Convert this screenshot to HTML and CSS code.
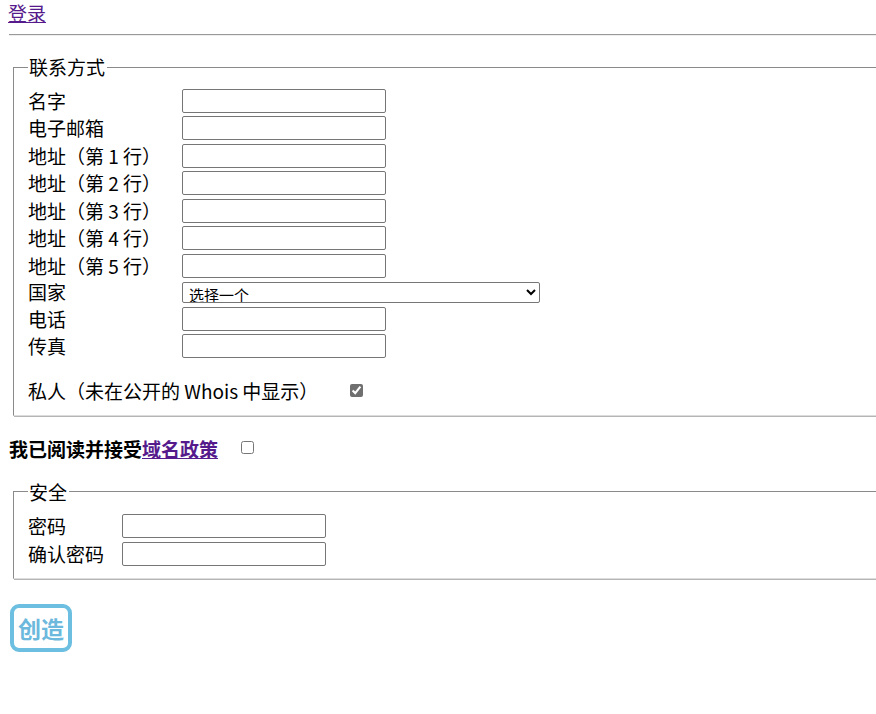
FILE: index.html
```html
<!DOCTYPE html>
<html lang="zh">
<head>
<meta charset="utf-8">
<title>注册</title>
<link rel="stylesheet" href="styles.css">
</head>
<body>
<div class="page">
  <a class="login" href="#">登录</a>
  <hr class="rule">
  <form class="form">
    <fieldset class="box contact">
      <legend class="legend">联系方式</legend>
      <div class="grid">
        <label class="lbl">名字</label><div class="cell"><input class="field" type="text"></div>
        <label class="lbl">电子邮箱</label><div class="cell"><input class="field" type="text"></div>
        <label class="lbl">地址（第 1 行）</label><div class="cell"><input class="field" type="text"></div>
        <label class="lbl">地址（第 2 行）</label><div class="cell"><input class="field" type="text"></div>
        <label class="lbl">地址（第 3 行）</label><div class="cell"><input class="field" type="text"></div>
        <label class="lbl">地址（第 4 行）</label><div class="cell"><input class="field" type="text"></div>
        <label class="lbl">地址（第 5 行）</label><div class="cell"><input class="field" type="text"></div>
        <label class="lbl">国家</label><div class="cell"><select class="country"><option>选择一个</option></select></div>
        <label class="lbl">电话</label><div class="cell"><input class="field" type="text"></div>
        <label class="lbl">传真</label><div class="cell"><input class="field" type="text"></div>
      </div>
      <div class="private">
        <span class="lbl private-lbl">私人（未在公开的 Whois 中显示）</span>
        <input class="check private-check" type="checkbox" checked>
      </div>
    </fieldset>
    <div class="agree">
      <span class="agree-text">我已阅读并接受<a class="policy" href="#">域名政策</a></span>
      <input class="check agree-check" type="checkbox">
    </div>
    <fieldset class="box security">
      <legend class="legend">安全</legend>
      <div class="grid grid-sec">
        <label class="lbl">密码</label><div class="cell"><input class="field" type="password"></div>
        <label class="lbl">确认密码</label><div class="cell"><input class="field" type="password"></div>
      </div>
    </fieldset>
    <button class="create" type="button">创造</button>
  </form>
</div>
</body>
</html>
```

FILE: styles.css
```css
html {
  overflow: hidden;
}
body {
  margin: 0 0 0 8px;
  font-family: "Noto Sans CJK SC", "Noto Sans", sans-serif;
  font-size: 19px;
  color: #000;
  background: #fff;
}
.page {
  width: 900px;
  padding-top: 1px;
}
.login {
  display: block;
  width: max-content;
  line-height: 23px;
  color: #551a8b;
  font-size: 19px;
}
.rule {
  margin: 10px 0 19px 1px;
  border: none;
  border-top: 1px solid #9a9a9a;
  border-bottom: 1px solid #eeeeee;
  height: 0;
}
.form {
  margin: 0;
}
.box {
  margin: 0 0 0 5px;
  padding: 8px 14px 10px 14px;
  border-style: solid;
  border-width: 1px;
  border-color: #8a8a8a #dcdcdc #dcdcdc #8a8a8a;
  box-shadow: inset 1px 1px 0 #ffffff, 1px 1px 0 #b5b5b5;
}
.legend {
  padding: 0 2px 0 1px;
  line-height: 24px;
  font-size: 19px;
}
.grid {
  display: grid;
  grid-template-columns: 154px auto;
  grid-template-rows: repeat(7, 27.5px) 25.5px 27.5px 27.5px;
  align-items: center;
  justify-items: start;
}
.grid-sec {
  grid-template-columns: 94px auto;
  grid-template-rows: 28px 28px;
}
.lbl {
  line-height: 24px;
  white-space: nowrap;
}
.cell {
  display: flex;
  align-items: center;
}
.field {
  box-sizing: border-box;
  width: 204px;
  height: 24px;
  margin: 0;
  border: 1px solid #767676;
  border-radius: 2px;
  background: #fff;
  font-size: 13px;
}
.country {
  box-sizing: border-box;
  width: 358px;
  height: 21px;
  margin: 0;
  padding: 0 2px;
  border: 1px solid #767676;
  border-radius: 2px;
  background: #fff;
  color: #000;
  font-family: "Noto Sans CJK SC", sans-serif;
  font-size: 15px;
  line-height: 19px;
}
.private {
  display: flex;
  align-items: center;
  margin-top: 17px;
  height: 27.5px;
}
.private-lbl {
  width: 322px;
}
.check {
  width: 13px;
  height: 13px;
  margin: 0;
}
.private-check {
  accent-color: #6f6f6f;
}
.agree {
  display: flex;
  align-items: center;
  gap: 23px;
  height: 28px;
  margin: 19px 0 0 0;
  padding-left: 1px;
}
.agree-text {
  font-weight: bold;
  line-height: 24px;
}
.policy {
  color: #551a8b;
}
.agree-check {
  margin-top: -2px;
}
.security {
  margin-top: 17px;
}
.create {
  display: block;
  box-sizing: border-box;
  width: 62px;
  height: 48px;
  margin: 25px 0 0 2px;
  padding: 0;
  border: 4px solid #6cbfe0;
  border-radius: 9px;
  background: #fff;
  color: #6cb9dd;
  font-family: "Noto Sans CJK SC", sans-serif;
  font-size: 23px;
  font-weight: bold;
  line-height: 30px;
}
```
